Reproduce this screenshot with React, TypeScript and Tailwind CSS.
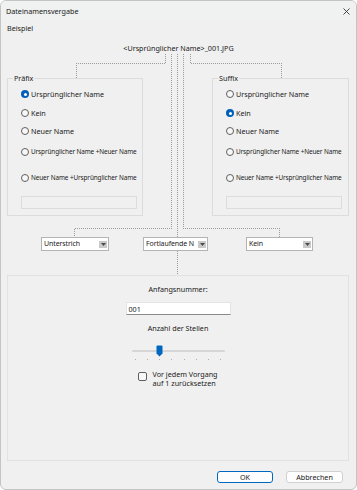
import React from "react";

const FONT = "font-['Noto_Sans',_'Open_Sans',_sans-serif]";

function Radio({ label, checked, small }: { label: string; checked?: boolean; small?: boolean }) {
  return (
    <div className="flex h-[12px] items-center gap-[2px]">
      {checked ? (
        <span className="flex h-[8px] w-[8px] shrink-0 items-center justify-center rounded-full bg-[#005fb8]">
          <span className="h-[3px] w-[3px] rounded-full bg-white" />
        </span>
      ) : (
        <span className="h-[8px] w-[8px] shrink-0 rounded-full border border-[#5f5f5f] bg-[#f7f7f7]" />
      )}
      <span className={`whitespace-nowrap ${small ? "text-[6.4px] tracking-[-0.1px]" : ""}`}>{label}</span>
    </div>
  );
}

function GroupBox({ title, checked, width }: { title: string; checked: number; width: string }) {
  const options = [
    "Ursprünglicher Name",
    "Kein",
    "Neuer Name",
    "Ursprünglicher Name +Neuer Name",
    "Neuer Name +Ursprünglicher Name",
  ];
  const gaps = ["mt-[9px]", "mt-[7px]", "mt-[6px]", "mt-[9px]", "mt-[14px]"];
  return (
    <div className={`relative h-[138px] ${width} border border-[#dcdcdc] pl-[13px]`}>
      <span className="absolute -top-[6px] left-[5px] bg-[#f0f0f0] px-px leading-[10px]">{title}</span>
      {options.map((o, i) => (
        <div key={o} className={gaps[i]}>
          <Radio label={o} checked={i === checked} small={i > 2} />
        </div>
      ))}
      <div className="mt-[12px] h-[13px] w-[116px] border border-[#dcdcdc] bg-[#f0f0f0]" />
    </div>
  );
}

function Dropdown({ value, width }: { value: string; width: string }) {
  return (
    <div className={`flex h-[14px] ${width} items-center justify-between gap-[1px] border border-[#b4b4b4] bg-white pl-[2px] pr-[1px]`}>
      <span className="min-w-0 whitespace-nowrap text-[7px] leading-[10px] tracking-[-0.1px]">{value}</span>
      <span className="flex h-[7px] w-[8px] shrink-0 items-center justify-center bg-[#c9c9c9]">
        <svg width="5" height="3" viewBox="0 0 5 3">
          <path d="M0 0 H5 L2.5 3 Z" fill="#4a4a4a" />
        </svg>
      </span>
    </div>
  );
}

function Connectors() {
  const lines = [
    "M165.5 54 V63.5 H76.5 V78",
    "M190.5 54 V63.5 H281.5 V78",
    "M171.5 54 V228.5 H74.5 V237",
    "M177.5 54 V237",
    "M177.5 251 V275",
    "M183.5 54 V228.5 H279.5 V237",
  ];
  return (
    <svg className="pointer-events-none absolute -left-px -top-px" width="357" height="490">
      {lines.map((d) => (
        <path key={d} d={d} fill="none" stroke="#9c9c9c" strokeWidth="1" strokeDasharray="1 1" shapeRendering="crispEdges" />
      ))}
    </svg>
  );
}

export default function App() {
  return (
    <div className={`relative h-[490px] w-[357px] overflow-hidden rounded-[6px] border border-[#c4c4c4] bg-[#f0f0f0] text-[7.2px] text-[#1b1b1b] ${FONT}`}>
      <Connectors />
      <div className="flex h-[20px] items-center justify-between bg-[#eff2f0] pl-[5px] pr-[6px]">
        <span className="leading-[10px]">Dateinamensvergabe</span>
        <svg width="7" height="7" viewBox="0 0 7 7">
          <path d="M0.5 0.5 L6.5 6.5 M6.5 0.5 L0.5 6.5" stroke="#333" strokeWidth="0.9" />
        </svg>
      </div>

      <div className="mt-[2px] pl-[6px] leading-[10px]">Beispiel</div>
      <div className="mt-[10px] text-center leading-[10px]">&lt;Ursprünglicher Name&gt;_001.JPG</div>

      <div className="mt-[25px] flex pl-[6px]">
        <GroupBox title="Präfix" checked={0} width="w-[136px]" />
        <div className="ml-[69px]">
          <GroupBox title="Suffix" checked={1} width="w-[137px]" />
        </div>
      </div>

      <div className="mt-[21px] flex pl-[40px]">
        <Dropdown value="Unterstrich" width="w-[68px]" />
        <div className="ml-[34px]">
          <Dropdown value="Fortlaufende N" width="w-[65px]" />
        </div>
        <div className="ml-[38px]">
          <Dropdown value="Kein" width="w-[67px]" />
        </div>
      </div>

      <div className="ml-[6px] mt-[24px] flex h-[186px] w-[342px] flex-col items-center border border-[#e2e2e2]">
        <div className="mt-[8px] leading-[10px]">Anfangsnummer:</div>
        <div className="mt-[8px] flex h-[13px] w-[105px] items-center border border-[#e4e4e4] border-b-[#8a8a8a] bg-white pl-[2px]">
          <span className="leading-[10px]">001</span>
        </div>
        <div className="mt-[8px] leading-[10px]">Anzahl der Stellen</div>
        <div className="relative mt-[12px] h-[12px] w-[93px]">
          <div className="mt-[5px] h-[2px] w-[93px] rounded-full bg-[#d6d6d6]" />
          <svg className="absolute left-[24px] top-0" width="7" height="12" viewBox="0 0 7 12">
            <path d="M0.5 1.5 Q0.5 0.5 1.5 0.5 H5.5 Q6.5 0.5 6.5 1.5 V8.5 L3.5 11.5 L0.5 8.5 Z" fill="#0067c0" />
          </svg>
        </div>
        <div className="mt-[2px] flex w-[87px] justify-between">
          {Array.from({ length: 8 }).map((_, i) => (
            <span key={i} className="h-[1px] w-[1px] bg-[#b0b0b0]" />
          ))}
        </div>
        <div className="mt-[10px] flex items-start gap-[5px]">
          <span className="mt-[2px] h-[9px] w-[9px] shrink-0 rounded-[2px] border border-[#606060] bg-[#f8f8f8]" />
          <div className="leading-[9px]">
            <div>Vor jedem Vorgang</div>
            <div>auf 1 zurücksetzen</div>
          </div>
        </div>
      </div>

      <div className="mt-[10px] flex justify-end gap-[13px] pr-[13px]">
        <div className="flex h-[12px] w-[56px] items-center justify-center rounded-[3px] border border-[#0067c0] bg-[#fdfdfd] leading-[10px]">
          OK
        </div>
        <div className="flex h-[12px] w-[57px] items-center justify-center rounded-[3px] border border-[#d0d0d0] bg-[#fdfdfd] leading-[10px]">
          Abbrechen
        </div>
      </div>
    </div>
  );
}
